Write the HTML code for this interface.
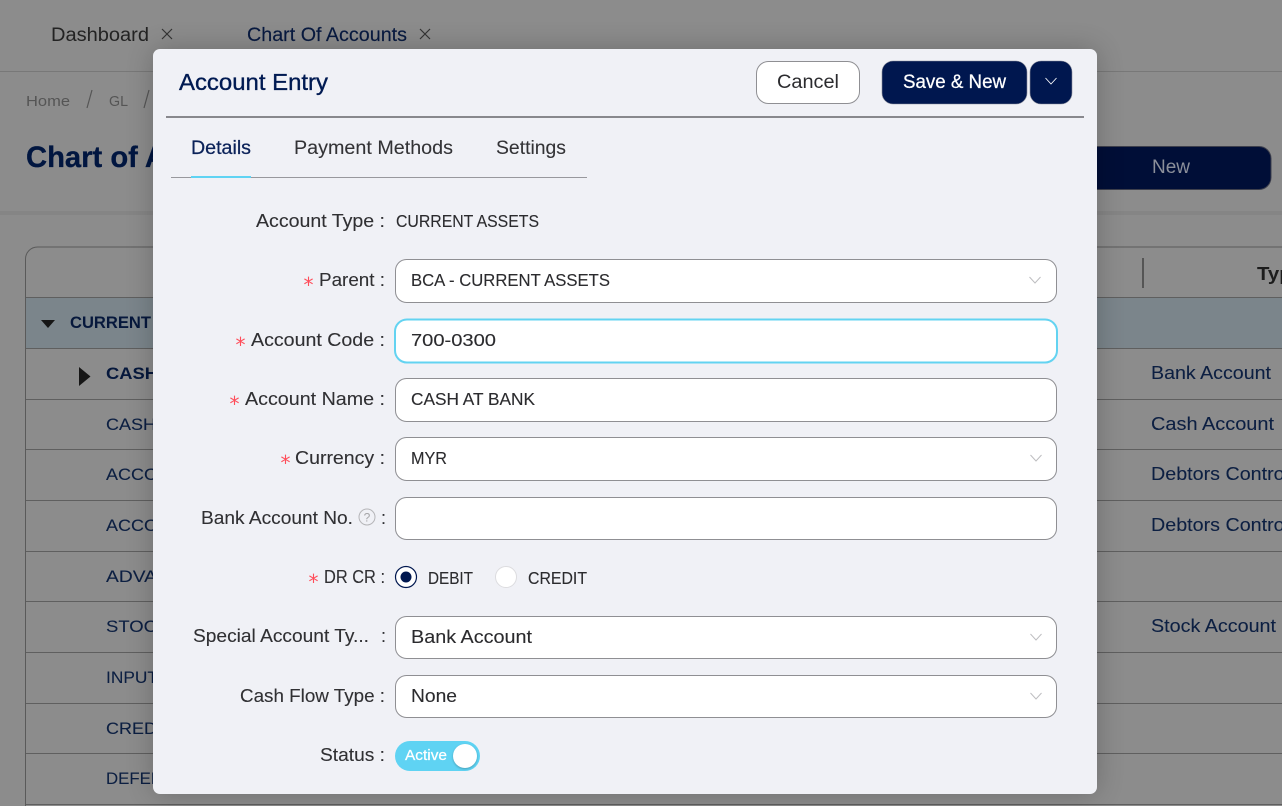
<!DOCTYPE html>
<html><head><meta charset="utf-8"><title>Account Entry</title>
<style>
html,body{margin:0;padding:0;width:1282px;height:806px;overflow:hidden;background:#8c8c8c}
svg{display:block;font-family:"Liberation Sans",sans-serif}
text{white-space:pre}
.l{font-size:18px;fill:#303033;stroke:#303033;stroke-width:.1}
.v{font-size:17.500px;fill:#2b2b2e;stroke:#2b2b2e;stroke-width:.12}
.w{font-size:18px;fill:#2b2b2e;stroke:#2b2b2e;stroke-width:.1}
.t{font-size:17px;fill:#0c1f42;stroke:#0c1f42;stroke-width:.08}
.y{font-size:18px;fill:#0c1f42;stroke:#0c1f42;stroke-width:.08}
.b{font-size:17px;font-weight:700;fill:#06183c}
.a{font-size:20px;fill:#ff4d5a;font-family:"DejaVu Sans",sans-serif}
.i{fill:#fff;stroke:#8f8f93;stroke-width:1}
.c{fill:none;stroke:#bdbdc0;stroke-width:1}
</style></head><body>
<svg width="1282" height="806" viewBox="0 0 1282 806" xmlns="http://www.w3.org/2000/svg">
<defs>
<filter id="s" x="-10%" y="-10%" width="120%" height="120%"><feGaussianBlur stdDeviation="14"/></filter>
<filter id="k" x="-30%" y="-30%" width="160%" height="160%"><feGaussianBlur stdDeviation="1"/></filter>
</defs>
<rect width="1282" height="806" fill="#8c8c8c"/>
<rect y="211" width="1282" height="4" fill="#858585"/>
<rect y="71" width="1282" height="1" fill="#787878"/>

<text x="51" y="41" font-size="19" fill="#232323" textLength="98" lengthAdjust="spacingAndGlyphs">Dashboard</text>
<path d="M162 29l10 10M172 29l-10 10" stroke="#333" stroke-width="1.2" fill="none"/>
<text x="247" y="41" font-size="19" fill="#081a40" stroke="#081a40" stroke-width=".15" textLength="160" lengthAdjust="spacingAndGlyphs">Chart Of Accounts</text>
<path d="M420 29l10 10M430 29l-10 10" stroke="#333" stroke-width="1.2" fill="none"/>

<text x="26" y="106" font-size="15" fill="#555" textLength="44" lengthAdjust="spacingAndGlyphs">Home</text>
<path d="M92 90l-5 18" stroke="#555" stroke-width="1.2"/>
<text x="109" y="106" font-size="15" fill="#555" textLength="19" lengthAdjust="spacingAndGlyphs">GL</text>
<path d="M149 90l-5 18" stroke="#555" stroke-width="1.2"/>
<text x="26" y="167" font-size="30" font-weight="700" fill="#011640" stroke="#011640" stroke-width=".3" textLength="140" lengthAdjust="spacingAndGlyphs">Chart of A</text>

<path d="M1085 146.500H1259a12 12 0 0 1 12 12v19a12 12 0 0 1-12 12H1085z" fill="#000e37" stroke="#3d3f4c" stroke-width="1"/>
<text x="1152" y="173" font-size="19" fill="#8b8f9a" textLength="38" lengthAdjust="spacingAndGlyphs">New</text>

<!-- table -->
<path d="M25.500 806V259a12 12 0 0 1 12-12H1282" fill="none" stroke="#5a5a5a"/>
<rect x="26" y="298" width="1256" height="50" fill="#7b858b"/>
<g stroke="#5f5f5f" stroke-width="1">
<path d="M26 297.500H1282M26 348.500H1282M26 399.500H1282M26 449.500H1282M26 500.500H1282M26 551.500H1282M26 601.500H1282M26 652.500H1282M26 703.500H1282M26 753.500H1282M26 804.500H1282"/>
</g>
<rect x="1142" y="258" width="2" height="30" fill="#555"/>
<text x="1257" y="280" font-size="18" font-weight="700" fill="#1c1c1c" textLength="46" lengthAdjust="spacingAndGlyphs">Type</text>
<polygon points="41,320 55,320 48,328" fill="#161616"/>
<polygon points="79,367 90.500,376.500 79,386" fill="#161616"/>
<text class="b" x="70" y="328" textLength="81" lengthAdjust="spacingAndGlyphs">CURRENT</text>
<text class="b" x="106" y="379" textLength="52" lengthAdjust="spacingAndGlyphs">CASH</text>
<text class="t" x="106" y="430" textLength="50" lengthAdjust="spacingAndGlyphs">CASH</text>
<text class="t" x="106" y="480" textLength="52" lengthAdjust="spacingAndGlyphs">ACCO</text>
<text class="t" x="106" y="531" textLength="52" lengthAdjust="spacingAndGlyphs">ACCO</text>
<text class="t" x="106" y="582" textLength="51" lengthAdjust="spacingAndGlyphs">ADVA</text>
<text class="t" x="106" y="632" textLength="51" lengthAdjust="spacingAndGlyphs">STOC</text>
<text class="t" x="106" y="683" textLength="52" lengthAdjust="spacingAndGlyphs">INPUT</text>
<text class="t" x="106" y="734" textLength="51" lengthAdjust="spacingAndGlyphs">CRED</text>
<text class="t" x="106" y="784" textLength="57" lengthAdjust="spacingAndGlyphs">DEFER</text>
<text class="y" x="1151" y="379" textLength="120" lengthAdjust="spacingAndGlyphs">Bank Account</text>
<text class="y" x="1151" y="430" textLength="123" lengthAdjust="spacingAndGlyphs">Cash Account</text>
<text class="y" x="1151" y="480" textLength="138" lengthAdjust="spacingAndGlyphs">Debtors Control</text>
<text class="y" x="1151" y="531" textLength="138" lengthAdjust="spacingAndGlyphs">Debtors Control</text>
<text class="y" x="1151" y="632" textLength="125" lengthAdjust="spacingAndGlyphs">Stock Account</text>

<!-- modal -->
<rect x="153" y="49" width="944" height="745" rx="7" fill="#000" opacity=".22" filter="url(#s)"/>
<rect x="153" y="49" width="944" height="745" rx="7" fill="#f0f1f6"/>
<text x="179" y="90" font-size="23" fill="#001a52" stroke="#001a52" stroke-width=".35" textLength="149" lengthAdjust="spacingAndGlyphs">Account Entry</text>
<rect x="756.500" y="61.500" width="103" height="42" rx="12" fill="#fff" stroke="#8f8f93"/>
<text x="777" y="88" font-size="19" fill="#2b2b2e" textLength="62" lengthAdjust="spacingAndGlyphs">Cancel</text>
<rect x="882" y="61" width="145" height="43" rx="11" fill="#00174f" stroke="#8a8d9a" stroke-width=".6"/>
<text x="903" y="88" font-size="19" fill="#fff" stroke="#fff" stroke-width=".25" textLength="103" lengthAdjust="spacingAndGlyphs">Save &amp; New</text>
<rect x="1030" y="61" width="42" height="43" rx="11" fill="#00174f" stroke="#8a8d9a" stroke-width=".6"/>
<path d="M1045.500 78l5.500 6 5.500-6" fill="none" stroke="#fff" stroke-width=".9"/>
<rect x="166" y="116" width="918" height="2" fill="#88888d"/>

<text x="191" y="154" font-size="19" fill="#0b2259" stroke="#0b2259" stroke-width=".25" textLength="60" lengthAdjust="spacingAndGlyphs">Details</text>
<text x="294" y="154" font-size="19" fill="#333336" stroke="#333336" stroke-width=".08" textLength="159" lengthAdjust="spacingAndGlyphs">Payment Methods</text>
<text x="496" y="154" font-size="19" fill="#333336" stroke="#333336" stroke-width=".08" textLength="70" lengthAdjust="spacingAndGlyphs">Settings</text>
<rect x="171" y="177" width="416" height="1" fill="#98989d"/>
<rect x="191" y="176" width="60" height="2" fill="#5fd3f3"/>

<!-- labels -->
<text class="l" x="256" y="227" textLength="129" lengthAdjust="spacingAndGlyphs">Account Type :</text>
<text class="v" x="396" y="227" textLength="143" lengthAdjust="spacingAndGlyphs">CURRENT ASSETS</text>

<text class="a" x="303.500" y="292">*</text>
<text class="l" x="319" y="286" textLength="66" lengthAdjust="spacingAndGlyphs">Parent :</text>
<rect class="i" x="395.500" y="259.500" width="661" height="43" rx="11"/>
<text class="v" x="411" y="286" textLength="199" lengthAdjust="spacingAndGlyphs">BCA - CURRENT ASSETS</text>
<path class="c" d="M1029.500 277l5.500 6 5.500-6"/>

<text class="a" x="235.500" y="352">*</text>
<text class="l" x="251" y="346" textLength="134" lengthAdjust="spacingAndGlyphs">Account Code :</text>
<rect x="395" y="319.500" width="662" height="43" rx="12" fill="#fff" stroke="#63d3f1" stroke-width="2"/>
<text class="v" x="411" y="346" textLength="85" lengthAdjust="spacingAndGlyphs">700-0300</text>

<text class="a" x="229.500" y="411">*</text>
<text class="l" x="245" y="405" textLength="140" lengthAdjust="spacingAndGlyphs">Account Name :</text>
<rect class="i" x="395.500" y="378.500" width="661" height="43" rx="11"/>
<text class="v" x="411" y="405" textLength="124" lengthAdjust="spacingAndGlyphs">CASH AT BANK</text>

<text class="a" x="280.500" y="470">*</text>
<text class="l" x="295" y="464" textLength="90" lengthAdjust="spacingAndGlyphs">Currency :</text>
<rect class="i" x="395.500" y="437.500" width="661" height="43" rx="11"/>
<text class="v" x="411" y="464" textLength="36" lengthAdjust="spacingAndGlyphs">MYR</text>
<path class="c" d="M1030.500 455l5.500 6 5.500-6"/>

<text class="l" x="201" y="524" textLength="152" lengthAdjust="spacingAndGlyphs">Bank Account No.</text>
<circle cx="367" cy="517" r="8" fill="none" stroke="#b5b5b8"/>
<text x="367" y="521.500" font-size="12" text-anchor="middle" fill="#a5a5a8">?</text>
<text class="l" x="381" y="524">:</text>
<rect class="i" x="395.500" y="497.500" width="661" height="42" rx="11"/>

<text class="a" x="308.500" y="589">*</text>
<text class="l" x="324" y="583" textLength="61" lengthAdjust="spacingAndGlyphs">DR CR :</text>
<circle cx="406" cy="577" r="10.500" fill="#fff" stroke="#00174f" stroke-width="1.200"/>
<circle cx="406" cy="577" r="5.500" fill="#00174f"/>
<text class="v" x="428" y="584" textLength="45" lengthAdjust="spacingAndGlyphs">DEBIT</text>
<circle cx="506" cy="577" r="10.500" fill="#fff" stroke="#dcdcdf"/>
<text class="v" x="528" y="584" textLength="59" lengthAdjust="spacingAndGlyphs">CREDIT</text>

<text class="l" x="193" y="642" textLength="176" lengthAdjust="spacingAndGlyphs">Special Account Ty...</text>
<text class="l" x="381" y="642">:</text>
<rect class="i" x="395.500" y="616.500" width="661" height="42" rx="11"/>
<text class="w" x="411" y="643" textLength="121" lengthAdjust="spacingAndGlyphs">Bank Account</text>
<path class="c" d="M1030.500 634l5.500 6 5.500-6"/>

<text class="l" x="240" y="702" textLength="145" lengthAdjust="spacingAndGlyphs">Cash Flow Type :</text>
<rect class="i" x="395.500" y="675.500" width="661" height="42" rx="11"/>
<text class="w" x="411" y="702" textLength="46" lengthAdjust="spacingAndGlyphs">None</text>
<path class="c" d="M1030.500 693l5.500 6 5.500-6"/>

<text class="l" x="320" y="761" textLength="65" lengthAdjust="spacingAndGlyphs">Status :</text>
<rect x="395" y="741" width="85" height="30" rx="15" fill="#5fd3f3"/>
<text x="405" y="760" font-size="15" fill="#fff" stroke="#fff" stroke-width=".25" textLength="42" lengthAdjust="spacingAndGlyphs">Active</text>
<circle cx="465" cy="757" r="12" fill="#000" opacity=".25" filter="url(#k)"/>
<circle cx="465" cy="756" r="12" fill="#fff"/>
</svg>
</body></html>
